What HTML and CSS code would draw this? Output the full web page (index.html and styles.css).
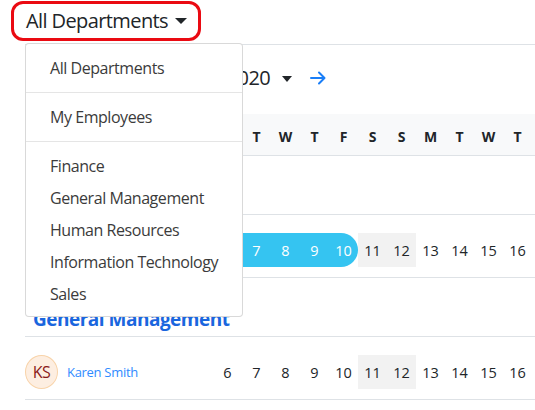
FILE: index.html
```html
<!DOCTYPE html>
<html lang="en">
<head>
<meta charset="utf-8">
<title>Schedule</title>
<link rel="stylesheet" href="styles.css">
</head>
<body>
<div class="page">
  <div class="topbar">
    <button class="dept-btn">All Departments<span class="caret"></span></button>
  </div>

  <div class="main">
    <div class="month-nav">
      <span class="nav-arrow left">
        <svg width="16" height="14" viewBox="0 0 16 14"><path d="M15 7H2M7 1.5L1.5 7L7 12.5" fill="none" stroke="#1a7ef7" stroke-width="2" stroke-linecap="round" stroke-linejoin="round"/></svg>
      </span>
      <span class="month">January 2020<span class="caret small"></span></span>
      <span class="nav-arrow right">
        <svg width="16" height="14" viewBox="0 0 16 14"><path d="M1 7H14M9 1.5L14.5 7L9 12.5" fill="none" stroke="#1a7ef7" stroke-width="2" stroke-linecap="round" stroke-linejoin="round"/></svg>
      </span>
    </div>

    <div class="table">
      <div class="row head">
        <div class="name-col"></div>
        <div class="day">M</div><div class="day">T</div><div class="day">W</div><div class="day">T</div><div class="day">F</div><div class="day">S</div><div class="day">S</div>
        <div class="day">M</div><div class="day">T</div><div class="day">W</div><div class="day">T</div>
      </div>

      <div class="row dept">
        <div class="dept-name">Finance</div>
      </div>

      <div class="row emp">
        <div class="name-col person">
          <span class="avatar">JB</span><a class="emp-name" href="#">John Brown</a>
        </div>
        <div class="num leave first">6</div><div class="num leave">7</div><div class="num leave">8</div><div class="num leave">9</div><div class="num leave last">10</div>
        <div class="num wkd">11</div><div class="num wkd">12</div>
        <div class="num">13</div><div class="num">14</div><div class="num">15</div><div class="num">16</div>
      </div>

      <div class="row dept">
        <div class="dept-name">General Management</div>
      </div>

      <div class="row emp">
        <div class="name-col person">
          <span class="avatar">KS</span><a class="emp-name" href="#">Karen Smith</a>
        </div>
        <div class="num">6</div><div class="num">7</div><div class="num">8</div><div class="num">9</div><div class="num">10</div>
        <div class="num wkd">11</div><div class="num wkd">12</div>
        <div class="num">13</div><div class="num">14</div><div class="num">15</div><div class="num">16</div>
      </div>
    </div>
  </div>

  <div class="dropdown">
    <a class="item" href="#">All Departments</a>
    <div class="divider"></div>
    <a class="item" href="#">My Employees</a>
    <div class="divider"></div>
    <a class="item" href="#">Finance</a>
    <a class="item" href="#">General Management</a>
    <a class="item" href="#">Human Resources</a>
    <a class="item" href="#">Information Technology</a>
    <a class="item" href="#">Sales</a>
  </div>
</div>
</body>
</html>
```

FILE: styles.css
```css
* { box-sizing: border-box; }

html, body {
  margin: 0;
  padding: 0;
  background: #fff;
  overflow: hidden;
}

body {
  font-family: "Open Sans", "Noto Sans", sans-serif;
  color: #212529;
  width: 535px;
  height: 410px;
}

.page {
  position: relative;
  width: 535px;
  height: 410px;
  overflow: hidden;
}

.topbar {
  height: 44px;
  padding: 1px 0 0 11px;
}

.dept-btn {
  display: flex;
  align-items: center;
  width: 190px;
  height: 40px;
  padding: 0 0 2px 12px;
  border: 3px solid #ea0a12;
  border-radius: 12px;
  background: #fff;
  font-family: inherit;
  font-size: 20px;
  letter-spacing: -0.6px;
  color: #212529;
  cursor: pointer;
}

.caret {
  display: inline-block;
  width: 0;
  height: 0;
  margin-left: 7px;
  margin-top: 2px;
  border-top: 6px solid #212529;
  border-left: 6px solid transparent;
  border-right: 6px solid transparent;
}

.caret.small {
  margin-left: 12px;
  border-top-width: 6px;
  border-left-width: 5px;
  border-right-width: 5px;
}

.main {
  margin-left: 25px;
  border-top: 1px solid #dee2e6;
  width: 510px;
}

.month-nav {
  height: 69px;
  display: flex;
  align-items: center;
  padding-bottom: 4px;
}

.nav-arrow {
  display: flex;
  align-items: center;
}

.nav-arrow.left { margin-right: 115px; }
.nav-arrow.right { margin-left: 18px; }

.month {
  display: flex;
  align-items: center;
  font-size: 20px;
  letter-spacing: -0.6px;
  color: #212529;
}

.row {
  display: grid;
  grid-template-columns: 188px repeat(11, 29px);
  border-bottom: 1px solid #dee2e6;
}

.row.head {
  height: 42px;
  background: #f8f9fa;
  align-items: center;
}

.day {
  text-align: center;
  font-weight: 700;
  font-size: 14px;
  color: #212529;
  padding-top: 3px;
}

.row.dept {
  height: 59px;
  align-items: end;
}

.dept-name {
  grid-column: 1 / -1;
  padding: 0 0 4px 8px;
  font-size: 19px;
  font-weight: 700;
  letter-spacing: -0.5px;
  color: #1a66de;
}

.row.emp {
  height: 63px;
  padding: 18px 0 10px;
}

.person {
  display: flex;
  align-items: center;
}

.avatar {
  width: 33px;
  height: 34px;
  border-radius: 50%;
  background: #fdeee1;
  border: 1px solid #f8d3a9;
  color: #8b1a1a;
  font-size: 16px;
  letter-spacing: -0.5px;
  display: flex;
  align-items: center;
  justify-content: center;
  flex: none;
}

.emp-name {
  margin-left: 9px;
  font-size: 13px;
  letter-spacing: -0.3px;
  color: #2f8bff;
  text-decoration: none;
}

.num {
  height: 34px;
  display: flex;
  align-items: center;
  justify-content: center;
  font-size: 14.5px;
  color: #212529;
}

.num.wkd { background: #f2f2f2; }

.num.leave {
  background: #35c4f1;
  color: #fff;
}

.num.leave.first { border-radius: 17px 0 0 17px; }
.num.leave.last { border-radius: 0 17px 17px 0; }

.dropdown {
  position: absolute;
  left: 25px;
  top: 43px;
  width: 218px;
  padding: 8px 0 6px;
  background: #fff;
  border: 1px solid rgba(0, 0, 0, 0.15);
  border-radius: 4px;
}

.item {
  display: block;
  height: 32px;
  line-height: 32px;
  padding-left: 24px;
  font-size: 16px;
  letter-spacing: -0.45px;
  color: #3b3b3b;
  text-decoration: none;
  white-space: nowrap;
}

.divider {
  margin: 8px 0;
  border-top: 1px solid #e5e5e5;
}
```
